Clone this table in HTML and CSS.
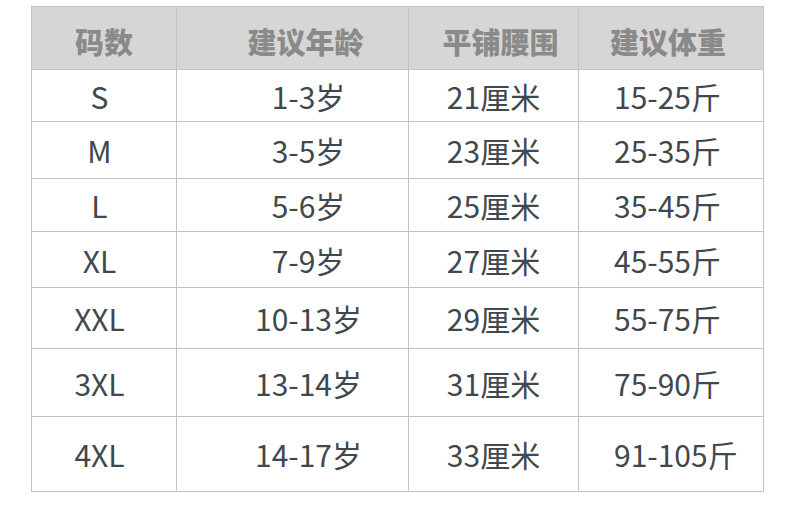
FILE: index.html
```html
<!DOCTYPE html>
<html lang="zh">
<head>
<meta charset="utf-8">
<link rel="stylesheet" href="styles.css">
</head>
<body>
<table class="size-table">
  <colgroup>
    <col class="c1"><col class="c2"><col class="c3"><col class="c4">
  </colgroup>
  <thead>
    <tr class="head">
      <th class="h1">码数</th>
      <th class="h2">建议年龄</th>
      <th class="h3">平铺腰围</th>
      <th class="h4">建议体重</th>
    </tr>
  </thead>
  <tbody>
    <tr class="r1"><td class="d1">S</td><td class="d2">1-3岁</td><td class="d3">21厘米</td><td class="d4">15-25斤</td></tr>
    <tr class="r2"><td class="d1">M</td><td class="d2">3-5岁</td><td class="d3">23厘米</td><td class="d4">25-35斤</td></tr>
    <tr class="r3"><td class="d1">L</td><td class="d2">5-6岁</td><td class="d3">25厘米</td><td class="d4">35-45斤</td></tr>
    <tr class="r4"><td class="d1">XL</td><td class="d2">7-9岁</td><td class="d3">27厘米</td><td class="d4">45-55斤</td></tr>
    <tr class="r5"><td class="d1">XXL</td><td class="d2">10-13岁</td><td class="d3">29厘米</td><td class="d4">55-75斤</td></tr>
    <tr class="r6"><td class="d1">3XL</td><td class="d2">13-14岁</td><td class="d3">31厘米</td><td class="d4">75-90斤</td></tr>
    <tr class="r7"><td class="d1">4XL</td><td class="d2">14-17岁</td><td class="d3">33厘米</td><td class="d4">91-105斤</td></tr>
  </tbody>
</table>
</body>
</html>
```
FILE: styles.css
```css
html, body {
  margin: 0;
  padding: 0;
  background: #ffffff;
}
body {
  font-family: "Noto Sans CJK SC", "Noto Sans", sans-serif;
}
.size-table {
  border-collapse: collapse;
  table-layout: fixed;
  width: 732px;
  margin: 6px 0 0 31px;
}
.c1 { width: 145px; }
.c2 { width: 232px; }
.c3 { width: 170px; }
.c4 { width: 185px; }
.size-table th,
.size-table td {
  border: 1px solid #c3c3c3;
  padding: 0;
  vertical-align: middle;
  white-space: nowrap;
}
.head th {
  background: #d6d6d6;
  color: #8a8a8a;
  font-size: 29px;
  font-weight: 900;
  height: 56px;
  padding-top: 6px;
  line-height: 1;
  text-align: center;
}
.h2 { padding-left: 26px !important; }
.h3 { padding-left: 14px !important; }
.h4 { padding-right: 6px !important; }

.size-table td {
  color: #3f484c;
  font-size: 30px;
  font-weight: 400;
  line-height: 1;
  text-align: center;
}
.d1 { padding-right: 9px !important; }
.d2 { padding-left: 32px !important; }
.d4 { text-align: left !important; padding-left: 35px !important; }

.r1 td { height: 51px; }
.r2 td { height: 56px; }
.r3 td { height: 52px; }
.r4 td { height: 55px; }
.r5 td { height: 60px; }
.r6 td { height: 67px; }
.r7 td { height: 74px; }
```
